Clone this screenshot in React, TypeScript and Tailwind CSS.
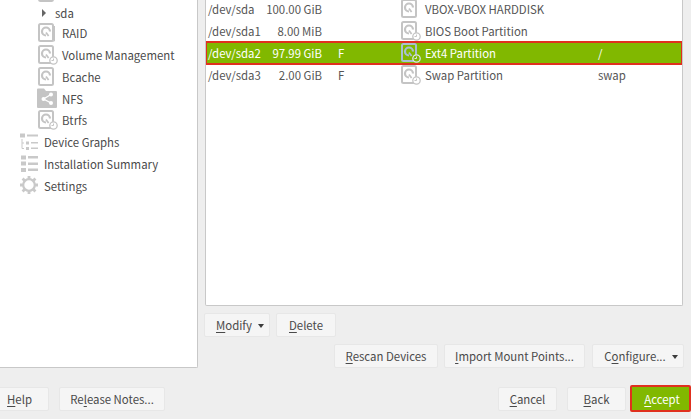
const font = "font-['Noto_Sans_CJK_SC','Noto_Sans',sans-serif]";

function DiskIcon({ badge = false, stack = false, color = "#c4c4c4", badgeColor = "#c4c4c4" }: { badge?: boolean; stack?: boolean; color?: string; badgeColor?: string }) {
  return (
    <svg width="20" height="20" viewBox="0 0 20 20" fill="none" className="shrink-0">
      {stack && <path d="M16.5 3v15h-11" stroke={color} strokeWidth="1" />}
      <rect x="1" y="1" width="14" height="17" rx="1.5" stroke={color} strokeWidth="2" />
      <path d="M12 8.5a4 4 0 1 0-4 4" stroke={color} strokeWidth="2.2" />
      <path d="M8 9.5l2.6 3.5" stroke={color} strokeWidth="1.8" />
      {badge && (
        <>
          <circle cx="15.5" cy="15.5" r="3.7" fill={color === "#c4c4c4" ? "#fff" : "#81b800"} stroke={badgeColor} strokeWidth="1.3" />
          <path d="M15.5 13.5v2h-2" stroke={badgeColor} strokeWidth="1" />
        </>
      )}
    </svg>
  );
}

function NfsIcon() {
  return (
    <svg width="20" height="20" viewBox="0 0 20 20" className="shrink-0">
      <path d="M0 1.5a1 1 0 0 1 1-1h6l2 2.5h10a1 1 0 0 1 1 1V19a1 1 0 0 1-1 1H1a1 1 0 0 1-1-1z" fill="#c4c4c4" />
      <path d="M14 6.5L6.5 11l7.5 4" stroke="#fff" strokeWidth="1.3" fill="none" />
      <circle cx="14" cy="6.5" r="2" fill="#fff" />
      <circle cx="6.5" cy="11" r="2" fill="#fff" />
      <circle cx="14" cy="15" r="2" fill="#fff" />
    </svg>
  );
}

function GraphIcon() {
  return (
    <svg width="18" height="18" viewBox="0 0 18 18" fill="none" className="shrink-0">
      <rect x="0" y="0.5" width="5" height="4" fill="#c9c9c9" />
      <rect x="7" y="1.5" width="11" height="2" fill="#c9c9c9" />
      <path d="M2 6v9.5h2M2 10h2" stroke="#c9c9c9" strokeWidth="1" />
      <rect x="6" y="8.5" width="3" height="3" fill="#c9c9c9" />
      <rect x="11" y="9" width="7" height="1.5" fill="#c9c9c9" />
      <rect x="6" y="14" width="3" height="3" fill="#c9c9c9" />
      <rect x="11" y="14.5" width="7" height="1.5" fill="#c9c9c9" />
    </svg>
  );
}

function SummaryIcon() {
  return (
    <svg width="18" height="18" viewBox="0 0 18 18" className="shrink-0" fill="#c9c9c9">
      <rect x="1" y="0.5" width="5" height="4" />
      <rect x="8" y="1" width="10" height="2.5" />
      <rect x="1" y="6.5" width="5" height="4" />
      <rect x="8" y="7.5" width="10" height="2.5" />
      <rect x="1" y="13" width="5" height="4" />
      <rect x="8" y="13.5" width="10" height="2.5" />
    </svg>
  );
}

function GearIcon() {
  return (
    <svg width="18" height="18" viewBox="0 0 18 18" fill="none" className="shrink-0">
      <circle cx="9" cy="9" r="5.8" stroke="#c9c9c9" strokeWidth="2.2" />
      <g stroke="#c9c9c9" strokeWidth="2.8">
        <path d="M9 0v3M9 15v3M0 9h3M15 9h3M2.6 2.6l2.1 2.1M13.3 13.3l2.1 2.1M2.6 15.4l2.1-2.1M13.3 4.7l2.1-2.1" />
      </g>
    </svg>
  );
}

function Caret() {
  return <span className="inline-block w-0 h-0 -mt-[1px] border-x-[3.5px] border-x-transparent border-t-[4px] border-t-[#3c3c3c]" />;
}

function Btn({ className = "", pre = "", key_ = "", post = "", caret = false }: { className?: string; pre?: string; key_?: string; post?: string; caret?: boolean }) {
  return (
    <div className={`h-6 pt-[2px] flex items-center justify-center gap-[6px] rounded-[2px] border border-[#e7e7e7] bg-[#f5f5f5] text-[#4a4a4a] whitespace-pre ${caret ? "pl-[6px]" : ""} ${className}`}>
      <span>
        {pre}
        <span className="underline underline-offset-2">{key_}</span>
        {post}
      </span>
      {caret && <Caret />}
    </div>
  );
}

function Tree() {
  return (
    <div className="-mt-[18px] text-[#4a4a4a]">
      <div className="h-[21.8px] flex items-center pl-[38px]"><DiskIcon /></div>
      <div className="h-[18px] flex items-center pl-[42px] gap-[9px]">
        <span className="w-0 h-0 border-y-[4px] border-y-transparent border-l-[4px] border-l-[#666]" />
        <span className="pt-[2px]">sda</span>
      </div>
      <div className="h-[22px] flex items-center pl-[38px] gap-[4px]"><DiskIcon stack /><span className="pt-[2px]">RAID</span></div>
      <div className="h-[22px] flex items-center pl-[38px] gap-[4px]"><DiskIcon badge /><span className="pt-[2px]">Volume Management</span></div>
      <div className="h-[22px] flex items-center pl-[38px] gap-[4px]"><DiskIcon /><span className="pt-[2px]">Bcache</span></div>
      <div className="h-[21px] flex items-center pl-[37px] gap-[5px]"><NfsIcon /><span className="pt-[2px]">NFS</span></div>
      <div className="h-[22px] flex items-center pl-[38px] gap-[4px]"><DiskIcon badge /><span className="pt-[2px]">Btrfs</span></div>
      <div className="h-[22px] flex items-center pl-[20px] gap-[6px]"><GraphIcon /><span className="pt-[2px]">Device Graphs</span></div>
      <div className="h-[22px] flex items-center pl-[20px] gap-[6px]"><SummaryIcon /><span className="pt-[2px]">Installation Summary</span></div>
      <div className="h-[21px] flex items-center pl-[20px] gap-[6px]"><GearIcon /><span className="pt-[2px]">Settings</span></div>
    </div>
  );
}

function Row({ dev, size, fmt, label, mount, selected = false }: { dev: string; size: string; fmt: string; label: string; mount: string; selected?: boolean }) {
  return (
    <div className={`h-[22px] grid grid-cols-[50px_64px_16px_63px_24px_173px_1fr] items-center pl-[2px] whitespace-nowrap ${selected ? "bg-[#81b800] text-white outline-2 -outline-offset-1 outline-[#e0301e]" : "text-[#555]"}`}>
      <span className="pt-[2px]">{dev}</span>
      <span className="pt-[2px] text-right">{size}</span>
      <span className="pt-[2px] col-start-4">{fmt}</span>
      <span>
        <DiskIcon badge={label !== "VBOX-VBOX HARDDISK"} color={selected ? "#a9bfd0" : "#c4c4c4"} badgeColor={selected ? "#d9e4ea" : "#c4c4c4"} />
      </span>
      <span className="pt-[2px]">{label}</span>
      <span className="pt-[2px]">{mount}</span>
    </div>
  );
}

export default function App() {
  return (
    <div className={`${font} w-[691px] h-[419px] overflow-hidden bg-[#eeeeee] text-[11.4px] leading-none flex flex-col`}>
      <div className="h-[368px] flex shrink-0">
        <div className="w-[198px] h-full overflow-hidden bg-white border-r border-b border-[#c8c8c8] rounded-br-[2px]">
          <Tree />
        </div>
        <div className="ml-[7px] w-[478px] flex flex-col">
          <div className="h-[307px] overflow-hidden bg-white border-r border-b border-l border-[#c8c8c8] rounded-b-[2px]">
            <div className="-mt-[2px]">
              <Row dev="/dev/sda" size="100.00 GiB" fmt="" label="VBOX-VBOX HARDDISK" mount="" />
              <Row dev="/dev/sda1" size="8.00 MiB" fmt="" label="BIOS Boot Partition" mount="" />
              <Row dev="/dev/sda2" size="97.99 GiB" fmt="F" label="Ext4 Partition" mount="/" selected />
              <Row dev="/dev/sda3" size="2.00 GiB" fmt="F" label="Swap Partition" mount="swap" />
            </div>
          </div>
          <div className="mt-[7px] flex gap-[6px] -ml-[1px]">
            <Btn className="w-[66px]" key_="M" post="odify" caret />
            <Btn className="w-[60px]" key_="D" post="elete" />
          </div>
          <div className="mt-[7px] flex justify-end -mr-[1px]">
            <Btn className="w-[104px]" key_="R" post="escan Devices" />
            <Btn className="ml-[6px] w-[141px]" key_="I" post="mport Mount Points..." />
            <Btn className="ml-[7px] w-[92px]" pre="C" key_="o" post="nfigure..." caret />
          </div>
        </div>
      </div>
      <div className="mt-[19px] flex items-start">
        <Btn className="w-[59px] -ml-[10px]" key_="H" post="elp" />
        <Btn className="ml-[10px] w-[106px]" pre="Re" key_="l" post="ease Notes..." />
        <Btn className="ml-auto w-[59px]" key_="C" post="ancel" />
        <Btn className="ml-[10px] w-[59px]" key_="B" post="ack" />
        <Btn className="ml-[4px] pl-[3px] w-[61px] !h-[27px] -mt-[2px] !bg-[#81b800] !text-white !border-2 !border-[#e0301e]" key_="A" post="ccept" />
      </div>
    </div>
  );
}
